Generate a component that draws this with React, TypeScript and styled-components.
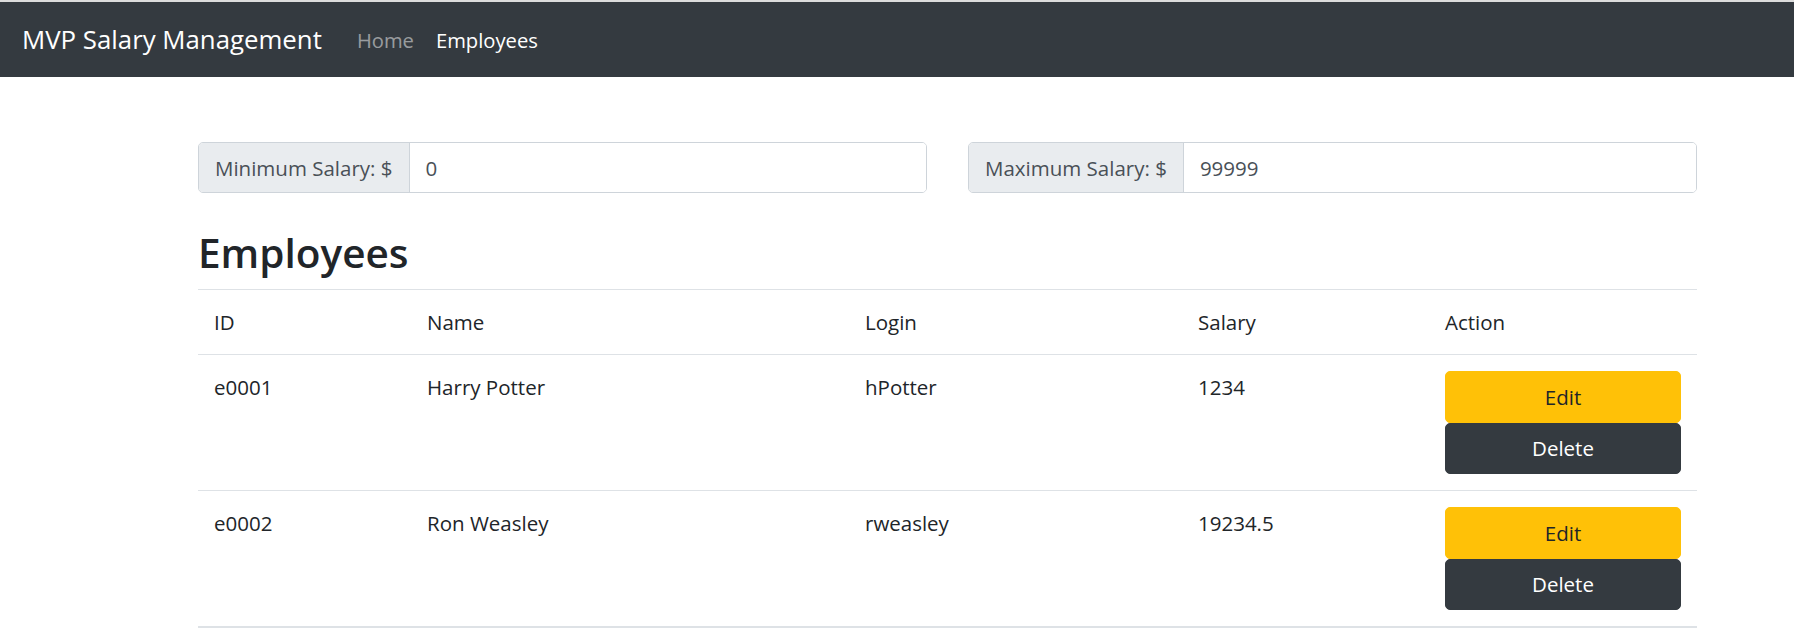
import React, { useState } from 'react'
import styled, { createGlobalStyle } from 'styled-components'

const GlobalStyle = createGlobalStyle`
  body {
    margin: 0;
    background: #fff;
    font-family: "Open Sans", "Noto Sans", sans-serif;
    color: #212529;
  }
`

type Employee = { id: string; name: string; login: string; salary: number }

const employees: Employee[] = [
  { id: 'e0001', name: 'Harry Potter', login: 'hPotter', salary: 1234 },
  { id: 'e0002', name: 'Ron Weasley', login: 'rweasley', salary: 19234.5 },
]

const columns = [
  { label: 'ID', width: 213 },
  { label: 'Name', width: 438 },
  { label: 'Login', width: 333 },
  { label: 'Salary', width: 247 },
  { label: 'Action', width: 268 },
]

export default function App() {
  const [min, setMin] = useState('0')
  const [max, setMax] = useState('99999')

  return (
    <>
      <GlobalStyle />
      <TopStrip />
      <Navbar>
        <Brand>MVP Salary Management</Brand>
        <NavLink>Home</NavLink>
        <NavLink active>Employees</NavLink>
      </Navbar>
      <Main>
        <FilterRow>
          <InputGroup>
            <Prepend>Minimum Salary: $</Prepend>
            <Input value={min} onChange={(e) => setMin(e.target.value)} />
          </InputGroup>
          <InputGroup>
            <Prepend>Maximum Salary: $</Prepend>
            <Input value={max} onChange={(e) => setMax(e.target.value)} />
          </InputGroup>
        </FilterRow>
        <Heading>Employees</Heading>
        <Table>
          <colgroup>
            {columns.map((c) => (
              <col key={c.label} style={{ width: c.width }} />
            ))}
          </colgroup>
          <thead>
            <tr>
              {columns.map((c) => (
                <Th key={c.label}>{c.label}</Th>
              ))}
            </tr>
          </thead>
          <tbody>
            {employees.map((emp) => (
              <tr key={emp.id}>
                <Td>{emp.id}</Td>
                <Td>{emp.name}</Td>
                <Td>{emp.login}</Td>
                <Td>{emp.salary}</Td>
                <Td>
                  <ActionButton variant="warning">Edit</ActionButton>
                  <ActionButton variant="dark">Delete</ActionButton>
                </Td>
              </tr>
            ))}
          </tbody>
        </Table>
      </Main>
    </>
  )
}

const TopStrip = styled.div`
  height: 2px;
  background: #dcdcdc;
`

const Navbar = styled.nav`
  height: 75px;
  background: #343a40;
  display: flex;
  align-items: center;
  padding: 0 22px;
  box-sizing: border-box;
`

const Brand = styled.span`
  font-size: 25.8px;
  color: #fff;
  margin-right: 24px;
  line-height: 1.5;
`

const NavLink = styled.span<{ active?: boolean }>`
  font-size: 20.2px;
  padding: 0 11px;
  color: ${(p) => (p.active ? '#fff' : 'rgba(255, 255, 255, 0.5)')};
`

const Main = styled.main`
  width: 1499px;
  margin-left: 198px;
  padding-top: 65px;
`

const FilterRow = styled.div`
  display: grid;
  grid-template-columns: 1fr 1fr;
  gap: 41px;
`

const InputGroup = styled.div`
  display: flex;
  height: 51px;
  box-sizing: border-box;
  border: 1px solid #ced4da;
  border-radius: 5px;
  overflow: hidden;
`

const Prepend = styled.span`
  display: flex;
  align-items: center;
  padding: 0 16px;
  background: #e9ecef;
  border-right: 1px solid #ced4da;
  color: #495057;
  font-size: 20.5px;
  white-space: nowrap;
`

const Input = styled.input`
  flex: 1;
  min-width: 0;
  border: none;
  outline: none;
  padding: 0 16px;
  font-family: inherit;
  font-size: 20.5px;
  color: #495057;
`

const Heading = styled.h2`
  margin: 34px 0 10px;
  font-size: 40.5px;
  font-weight: 600;
  line-height: 52px;
`

const Table = styled.table`
  width: 100%;
  border-collapse: collapse;
  table-layout: fixed;
  font-size: 20.5px;
  border-bottom: 2px solid #dee2e6;
`

const Th = styled.th`
  text-align: left;
  font-weight: 400;
  padding: 16px;
  line-height: 32px;
  border-top: 1px solid #dee2e6;
  border-bottom: 1px solid #dee2e6;
`

const Td = styled.td`
  padding: 16px;
  line-height: 32px;
  vertical-align: top;
  border-top: 1px solid #dee2e6;
`

const ActionButton = styled.button<{ variant: 'warning' | 'dark' }>`
  display: block;
  width: 100%;
  height: 51.5px;
  border: 1px solid ${(p) => (p.variant === 'warning' ? '#ffc107' : '#343a40')};
  border-radius: 5px;
  background: ${(p) => (p.variant === 'warning' ? '#ffc107' : '#343a40')};
  color: ${(p) => (p.variant === 'warning' ? '#212529' : '#fff')};
  font-family: inherit;
  font-size: 20.5px;
  cursor: pointer;
`
